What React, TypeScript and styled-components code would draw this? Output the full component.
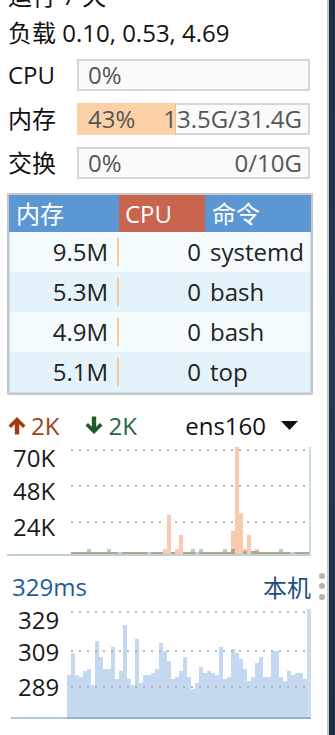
import React from "react";
import styled, { createGlobalStyle } from "styled-components";

const GlobalStyle = createGlobalStyle`
  html, body { margin: 0; padding: 0; background: #fff; }
  body {
    font-family: "Open Sans", "Noto Sans CJK SC", sans-serif;
    overflow: hidden;
  }
`;

const Screen = styled.div`
  display: flex;
  width: 335px;
  height: 735px;
  overflow: hidden;
  background: #fff;
`;

const Panel = styled.div`
  width: 327px;
  flex: none;
  display: flex;
  flex-direction: column;
  font-size: 24px;
  color: #111;
`;

const Divider = styled.div`
  width: 2px;
  flex: none;
  background: #c8c8c8;
`;

const Edge = styled.div`
  flex: 1;
  background: linear-gradient(180deg, #1c3045, #213a52 50%, #1b2f44);
`;

const InfoLine = styled.div<{ $shift?: number }>`
  height: 37px;
  line-height: 37px;
  padding-left: 8px;
  margin-top: ${(p) => p.$shift ?? 0}px;
  white-space: nowrap;
`;

const MeterList = styled.div`
  margin-top: 2px;
  display: flex;
  flex-direction: column;
`;

const MeterRow = styled.div`
  height: 44px;
  display: grid;
  grid-template-columns: 69px 233px;
  align-items: center;
  padding-left: 8px;
`;

const MeterLabel = styled.span`
  line-height: 32px;
`;

const Meter = styled.div`
  position: relative;
  height: 32px;
  box-sizing: border-box;
  border: 2px solid #d6d6d6;
  background: #fafafa;
`;

const MeterFill = styled.div`
  position: absolute;
  left: -2px;
  top: -2px;
  bottom: -2px;
  background: #fdd1a8;
  border-right: 1px solid #f3bf8c;
`;

const MeterText = styled.div`
  position: relative;
  display: flex;
  justify-content: space-between;
  padding: 0 6px 0 9px;
  line-height: 28px;
  color: #555;
  white-space: nowrap;
`;

const Table = styled.div`
  margin: 8px 0 0 7px;
  width: 306px;
  box-sizing: border-box;
  border: 2px solid #c8c8c8;
`;

const HeadRow = styled.div`
  display: grid;
  grid-template-columns: 110px 86px 106px;
  height: 37px;
  line-height: 37px;
  color: #fff;
`;

const HeadCell = styled.div<{ $active?: boolean }>`
  background: ${(p) => (p.$active ? "#c9644f" : "#5b98d3")};
  padding-left: ${(p) => (p.$active ? 6 : 7)}px;
`;

const Body = styled.div`
  border: 1px solid #c2def0;
  border-top: none;
`;

const ProcRow = styled.div<{ $alt: boolean }>`
  display: grid;
  grid-template-columns: 107px 2px 86px 1fr;
  align-items: center;
  height: 40px;
  background: ${(p) => (p.$alt ? "#e4f3f9" : "#f3fbfd")};
  color: #222;
`;

const NumCell = styled.div<{ $pad: number }>`
  text-align: right;
  padding-right: ${(p) => p.$pad}px;
  line-height: 40px;
`;

const ColMark = styled.div`
  height: 28px;
  background: #f8caa0;
`;

const CmdCell = styled.div`
  padding-left: 5px;
  line-height: 40px;
  white-space: nowrap;
`;

const NetHeader = styled.div`
  margin-top: 8px;
  height: 44px;
  display: flex;
  align-items: center;
  padding: 0 29px 0 8px;
`;

const Rate = styled.div<{ $color: string; $iconColor: string; $gap?: number }>`
  display: flex;
  align-items: center;
  gap: 5px;
  color: ${(p) => p.$color};
  margin-left: ${(p) => p.$gap ?? 0}px;
  svg { color: ${(p) => p.$iconColor}; display: block; }
`;

const Iface = styled.div`
  margin-left: auto;
  display: flex;
  align-items: center;
  gap: 15px;
  color: #111;
`;

const ChartBox = styled.div<{ $left: number }>`
  display: flex;
  margin-left: ${(p) => p.$left}px;
`;

const Labels = styled.div<{ $w: number; $pad: number; $top: number; $line: string }>`
  width: ${(p) => p.$w}px;
  flex: none;
  box-sizing: border-box;
  padding-left: ${(p) => p.$pad}px;
  padding-top: ${(p) => p.$top}px;
  border-bottom: 2px solid ${(p) => p.$line};
  display: flex;
  flex-direction: column;
  color: #1a1a1a;
`;

const AxisLabel = styled.div<{ $mt: number }>`
  line-height: 22px;
  margin-top: ${(p) => p.$mt}px;
`;

const Plot = styled.div<{ $line: string }>`
  display: flex;
  border-bottom: 2px solid ${(p) => p.$line};
  svg { display: block; }
`;

const PingHeader = styled.div`
  margin-top: 8px;
  height: 44px;
  display: flex;
  align-items: center;
  padding: 0 2px 0 12px;
`;

const PingValue = styled.div`
  color: #1b5c9a;
`;

const Host = styled.div`
  margin-left: auto;
  display: flex;
  align-items: center;
  gap: 8px;
  color: #1f4e7c;
`;

const Dots = styled.div`
  display: flex;
  flex-direction: column;
  gap: 4.5px;
  span {
    width: 6px;
    height: 6px;
    border-radius: 50%;
    background: #b4b4b4;
  }
`;

const meters = [
  { label: "CPU", left: "0%", right: "", pct: 0 },
  { label: "内存", left: "43%", right: "13.5G/31.4G", pct: 43 },
  { label: "交换", left: "0%", right: "0/10G", pct: 0 },
];

const procs = [
  { mem: "9.5M", cpu: "0", cmd: "systemd" },
  { mem: "5.3M", cpu: "0", cmd: "bash" },
  { mem: "4.9M", cpu: "0", cmd: "bash" },
  { mem: "5.1M", cpu: "0", cmd: "top" },
];

const BoldArrow = ({ down }: { down?: boolean }) => (
  <svg width={18} height={19} viewBox="0 0 18 19" style={down ? { transform: "rotate(180deg)" } : undefined}>
    <path
      d="M9 1 L17.5 9.5 L15 12 L11.2 8.2 V18.5 H6.8 V8.2 L3 12 L0.5 9.5 Z"
      fill="currentColor"
      strokeLinejoin="round"
    />
  </svg>
);

const Grid = ({ w, ys, x0 = 0 }: { w: number; ys: number[]; x0?: number }) => (
  <>
    {ys.map((y) =>
      Array.from({ length: Math.floor((w - x0) / 8) + 1 }).map((_, k) => (
        <rect key={`${y}-${k}`} x={x0 + k * 8} y={y} width={2} height={2} fill="#b6b6b6" />
      ))
    )}
  </>
);

const netOrange: [number, number][] = [
  [23, 5], [24, 39], [26, 5], [27, 19], [40, 23], [41, 107], [42, 41], [43, 5], [44, 19], [45, 3], [46, 5],
];
const netGreen = [4, 9, 30, 32, 38, 52];
const netOlive: [number, number][] = [[40, 5], [43, 3], [45, 3], [46, 3]];

const NetChart = () => (
  <svg width={240} height={107} viewBox="0 0 240 107">
    <Grid w={236} ys={[2, 38, 74]} />
    <rect x={0} y={105} width={240} height={2} fill="#aaa98b" />
    {[[47, 4], [76, 4], [124, 4], [219, 5]].map(([x, w]) => (
      <rect key={x} x={x} y={105} width={w} height={2} fill="#bcd2dc" />
    ))}
    {netGreen.map((i) => (
      <rect key={i} x={i * 4} y={102} width={4} height={3} fill="#b9cdb5" />
    ))}
    {netOrange.map(([i, h]) => (
      <rect key={i} x={i * 4} y={107 - h} width={4} height={h} fill="#f9cab0" />
    ))}
    {netOlive.map(([i, h]) => (
      <rect key={i} x={i * 4} y={107 - h} width={4} height={h} fill="#b9a383" />
    ))}
    <rect x={238} y={0} width={2} height={107} fill="#c8dce6" />
  </svg>
);

const pingTops = [
  675, 653, 675, 677, 671, 669, 685, 641, 657, 669, 669, 647, 679, 671, 625, 679, 685, 639, 683, 675, 675,
  673, 669, 643, 651, 661, 679, 677, 671, 657, 677, 689, 683, 667, 673, 671, 673, 675, 647, 679, 677, 649,
  653, 659, 669, 681, 677, 663, 657, 677, 677, 651, 651, 677, 681, 671, 675, 673, 673, 679, 609,
];

const PingChart = () => (
  <svg width={244} height={109} viewBox="0 0 244 109">
    {pingTops.map((t, i) => (
      <rect key={i} x={i * 4} y={t - 608} width={4} height={717 - t} fill={i === 60 ? "#cadcf0" : "#c4d8ef"} />
    ))}
    <Grid w={248} ys={[3, 42, 78]} x0={-4} />
  </svg>
);

export default function App() {
  return (
    <Screen>
      <GlobalStyle />
      <Panel>
        <InfoLine $shift={-23}>运行 7 天</InfoLine>
        <InfoLine>负载 0.10, 0.53, 4.69</InfoLine>
        <MeterList>
          {meters.map((m) => (
            <MeterRow key={m.label}>
              <MeterLabel>{m.label}</MeterLabel>
              <Meter>
                {m.pct > 0 && <MeterFill style={{ width: `${m.pct}%` }} />}
                <MeterText>
                  <span>{m.left}</span>
                  <span>{m.right}</span>
                </MeterText>
              </Meter>
            </MeterRow>
          ))}
        </MeterList>
        <Table>
          <HeadRow>
            <HeadCell>内存</HeadCell>
            <HeadCell $active>CPU</HeadCell>
            <HeadCell>命令</HeadCell>
          </HeadRow>
          <Body>
            {procs.map((p, i) => (
              <ProcRow key={i} $alt={i % 2 === 1}>
                <NumCell $pad={9}>{p.mem}</NumCell>
                <ColMark />
                <NumCell $pad={4}>{p.cpu}</NumCell>
                <CmdCell>{p.cmd}</CmdCell>
              </ProcRow>
            ))}
          </Body>
        </Table>
        <NetHeader>
          <Rate $color="#9a4514" $iconColor="#a33a0f">
            <BoldArrow />
            2K
          </Rate>
          <Rate $color="#1f6a40" $iconColor="#22592a" $gap={26}>
            <BoldArrow down />
            2K
          </Rate>
          <Iface>
            ens160
            <svg width={17} height={9} viewBox="0 0 17 9">
              <path d="M0 0H17L8.5 9Z" fill="#111" />
            </svg>
          </Iface>
        </NetHeader>
        <ChartBox $left={7}>
          <Labels $w={64} $pad={6} $top={0} $line="#bcd1db">
            <AxisLabel $mt={0}>70K</AxisLabel>
            <AxisLabel $mt={11}>48K</AxisLabel>
            <AxisLabel $mt={14}>24K</AxisLabel>
          </Labels>
          <Plot $line="#bcd1db">
            <NetChart />
          </Plot>
        </ChartBox>
        <PingHeader>
          <PingValue>329ms</PingValue>
          <Host>
            本机
            <Dots>
              <span />
              <span />
              <span />
            </Dots>
          </Host>
        </PingHeader>
        <ChartBox $left={11}>
          <Labels $w={56} $pad={7} $top={1} $line="#b0cad8">
            <AxisLabel $mt={0}>329</AxisLabel>
            <AxisLabel $mt={10}>309</AxisLabel>
            <AxisLabel $mt={13}>289</AxisLabel>
          </Labels>
          <Plot $line="#93b3cc">
            <PingChart />
          </Plot>
        </ChartBox>
      </Panel>
      <Divider />
      <Edge />
    </Screen>
  );
}
